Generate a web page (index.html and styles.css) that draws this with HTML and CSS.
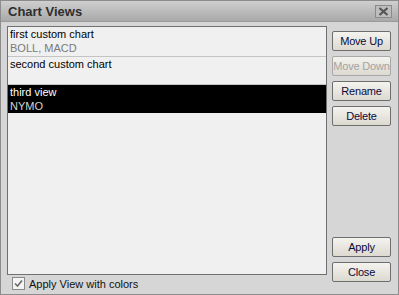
FILE: index.html
```html
<!DOCTYPE html>
<html lang="en">
<head>
    <meta charset="UTF-8">
    <title>Chart Views</title>
    <link rel="stylesheet" href="styles.css">
</head>
<body>
    <div class="window">
        <div class="title-bar">
            <span class="title">Chart Views</span>
            <span class="close-box">
                <svg width="11" height="9" viewBox="0 0 11 9">
                    <path d="M1.5 1 L9.5 8 M9.5 1 L1.5 8" stroke="#555" stroke-width="2.2"/>
                </svg>
            </span>
        </div>
        <div class="content">
            <div class="left-col">
                <div class="view-list">
                    <div class="view-item">
                        <div class="view-name">first custom chart</div>
                        <div class="view-studies">BOLL, MACD</div>
                    </div>
                    <div class="view-item">
                        <div class="view-name">second custom chart</div>
                        <div class="view-studies"></div>
                    </div>
                    <div class="view-item selected">
                        <div class="view-name">third view</div>
                        <div class="view-studies">NYMO</div>
                    </div>
                </div>
                <label class="check-row">
                    <span class="check-box">
                        <svg width="9" height="9" viewBox="0 0 9 9">
                            <path d="M1 4.5 L3.5 7 L8 1.5" fill="none" stroke="#6a6a6a" stroke-width="1.6"/>
                        </svg>
                    </span>
                    Apply View with colors
                </label>
            </div>
            <div class="buttons">
                <button class="btn">Move Up</button>
                <button class="btn" disabled>Move Down</button>
                <button class="btn">Rename</button>
                <button class="btn">Delete</button>
                <div class="spacer"></div>
                <button class="btn">Apply</button>
                <button class="btn">Close</button>
            </div>
        </div>
    </div>
</body>
</html>
```

FILE: styles.css
```css
body {
    margin: 0;
    padding: 0;
    background: #d6d6d6;
    font-family: "Liberation Sans", Arial, sans-serif;
}
.window {
    width: 399px;
    height: 295px;
    box-sizing: border-box;
    border: 1px solid #8c8c8c;
    background: #d6d6d6;
    display: flex;
    flex-direction: column;
}
.title-bar {
    height: 20px;
    display: flex;
    align-items: center;
    justify-content: space-between;
    padding: 0 6px 0 7px;
    background: linear-gradient(#cfcfcf, #a9a9a9);
    border-bottom: 1px solid #9a9a9a;
}
.title {
    font-size: 13px;
    font-weight: bold;
    color: #2e2e2e;
}
.close-box {
    width: 17px;
    height: 13px;
    box-sizing: border-box;
    border: 1px solid #8a8a8a;
    background: #bdbdbd;
    display: flex;
    align-items: center;
    justify-content: center;
}
.content {
    flex: 1;
    display: flex;
    gap: 5px;
    padding: 4px 7px 0 6px;
}
.left-col {
    flex: 1;
    display: flex;
    flex-direction: column;
}
.view-list {
    flex: 1;
    background: #f0f0f0;
    border: 1px solid #707070;
}
.view-item {
    height: 28px;
    padding: 0 2px;
    box-sizing: border-box;
    border-bottom: 1px solid #c4c4c4;
    color: #000;
}
.view-item:first-child {
    height: 30px;
}
.view-item.selected {
    background: #000;
    color: #fff;
    border-bottom: none;
}
.view-name {
    font-size: 11px;
    line-height: 14px;
}
.view-studies {
    font-size: 11px;
    line-height: 14px;
    color: #7a7a7a;
}
.view-item.selected .view-studies {
    color: #d4d4d4;
}
.check-row {
    display: flex;
    align-items: center;
    gap: 4px;
    height: 17px;
    margin-bottom: 2px;
    padding-left: 5px;
    font-size: 11px;
    color: #111;
}
.check-box {
    width: 13px;
    height: 13px;
    box-sizing: border-box;
    border: 1px solid #8a8a8a;
    background: #f4f4f4;
    display: flex;
    align-items: center;
    justify-content: center;
}
.buttons {
    width: 59px;
    display: flex;
    flex-direction: column;
    gap: 5px;
    padding-top: 5px;
    padding-bottom: 12px;
}
.spacer {
    flex: 1;
}
.btn {
    height: 20px;
    flex: none;
    padding: 0;
    white-space: nowrap;
    font-family: "Liberation Sans", Arial, sans-serif;
    font-size: 11px;
    letter-spacing: -0.2px;
    color: #0a0a3a;
    background: linear-gradient(#f4f3ee, #dcd9d0);
    border: 1px solid #6e6e6e;
    border-radius: 2px;
}
.btn:disabled {
    color: #a4a4a4;
    border-color: #a8a8a8;
}
```
